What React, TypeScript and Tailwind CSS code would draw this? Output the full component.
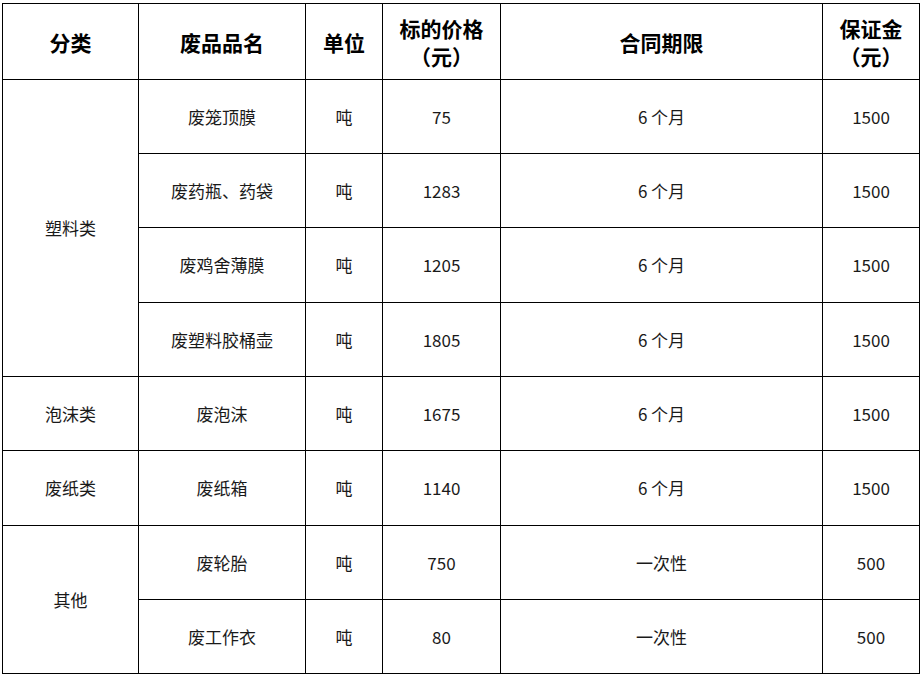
const rows = [
  { cat: "塑料类", span: 4, name: "废笼顶膜", price: "75", term: "6 个月", deposit: "1500", h: "h-[74px]" },
  { name: "废药瓶、药袋", price: "1283", term: "6 个月", deposit: "1500", h: "h-[74px]" },
  { name: "废鸡舍薄膜", price: "1205", term: "6 个月", deposit: "1500", h: "h-[75px]" },
  { name: "废塑料胶桶壶", price: "1805", term: "6 个月", deposit: "1500", h: "h-[74px]" },
  { cat: "泡沫类", span: 1, name: "废泡沫", price: "1675", term: "6 个月", deposit: "1500", h: "h-[74px]" },
  { cat: "废纸类", span: 1, name: "废纸箱", price: "1140", term: "6 个月", deposit: "1500", h: "h-[75px]" },
  { cat: "其他", span: 2, name: "废轮胎", price: "750", term: "一次性", deposit: "500", h: "h-[74px]" },
  { name: "废工作衣", price: "80", term: "一次性", deposit: "500", h: "h-[74px]" },
];

const cell = "border border-black text-center align-middle p-0";

export default function App() {
  return (
    <div className="h-[675px] w-[922px] bg-white pl-[2px] pt-[3px] font-['Noto_Sans_CJK_SC',sans-serif] text-black">
      <table className="w-[917px] table-fixed border-collapse">
        <colgroup>
          <col className="w-[136px]" />
          <col className="w-[167px]" />
          <col className="w-[77px]" />
          <col className="w-[118px]" />
          <col className="w-[322px]" />
          <col className="w-[97px]" />
        </colgroup>
        <thead>
          <tr className="h-[76px] text-[21px] font-bold leading-[28px]">
            <th className={cell}>分类</th>
            <th className={cell}>废品品名</th>
            <th className={cell}>单位</th>
            <th className={cell}>
              标的价格
              <br />
              （元）
            </th>
            <th className={cell}>合同期限</th>
            <th className={cell}>
              保证金
              <br />
              （元）
            </th>
          </tr>
        </thead>
        <tbody className="text-[17px] text-[#1a1a1a]">
          {rows.map((r) => (
            <tr key={r.name} className={r.h}>
              {r.cat && (
                <td rowSpan={r.span} className={cell}>
                  {r.cat}
                </td>
              )}
              <td className={cell}>{r.name}</td>
              <td className={cell}>吨</td>
              <td className={cell}>{r.price}</td>
              <td className={cell}>{r.term}</td>
              <td className={cell}>{r.deposit}</td>
            </tr>
          ))}
        </tbody>
      </table>
    </div>
  );
}
